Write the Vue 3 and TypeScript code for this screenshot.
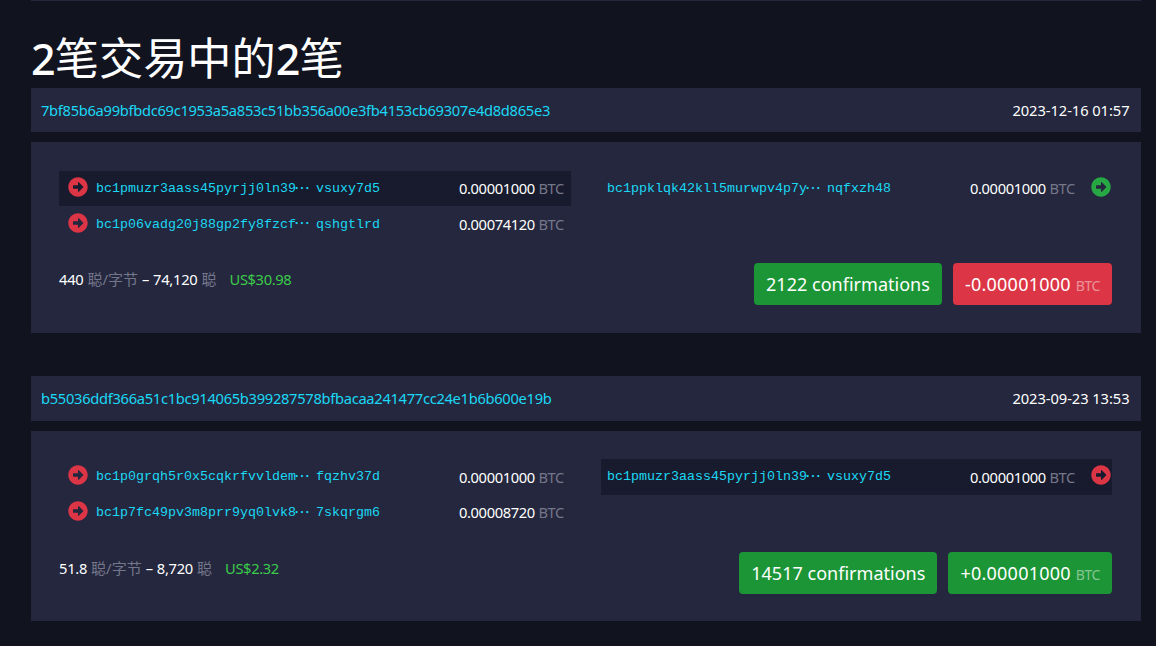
<script setup lang="ts">
interface TxEntry {
  head: string
  tail: string
  amount: string
  active?: boolean
  spent?: boolean
}

interface Tx {
  id: string
  time: string
  inputs: TxEntry[]
  outputs: TxEntry[]
  rate: string
  fee: string
  fiat: string
  confirmations: number
  balance: string
  positive: boolean
}

const arrowPath = 'M256 8c137 0 248 111 248 248S393 504 256 504 8 393 8 256 119 8 256 8zM140 300h116v70.9c0 10.7 13 16.1 20.5 8.5l114.3-114.9c4.7-4.7 4.7-12.2 0-16.9l-114.3-115c-7.6-7.6-20.5-2.2-20.5 8.5V212H140c-6.6 0-12 5.4-12 12v64c0 6.6 5.4 12 12 12z'

const transactions: Tx[] = [
  {
    id: '7bf85b6a99bfbdc69c1953a5a853c51bb356a00e3fb4153cb69307e4d8d865e3',
    time: '2023-12-16 01:57',
    inputs: [
      { head: 'bc1pmuzr3aass45pyrjj0ln39', tail: 'vsuxy7d5', amount: '0.00001000', active: true },
      { head: 'bc1p06vadg20j88gp2fy8fzcf', tail: 'qshgtlrd', amount: '0.00074120' }
    ],
    outputs: [
      { head: 'bc1ppklqk42kll5murwpv4p7y', tail: 'nqfxzh48', amount: '0.00001000' }
    ],
    rate: '440',
    fee: '74,120',
    fiat: 'US$30.98',
    confirmations: 2122,
    balance: '-0.00001000',
    positive: false
  },
  {
    id: 'b55036ddf366a51c1bc914065b399287578bfbacaa241477cc24e1b6b600e19b',
    time: '2023-09-23 13:53',
    inputs: [
      { head: 'bc1p0grqh5r0x5cqkrfvvldem', tail: 'fqzhv37d', amount: '0.00001000' },
      { head: 'bc1p7fc49pv3m8prr9yq0lvk8', tail: '7skqrgm6', amount: '0.00008720' }
    ],
    outputs: [
      { head: 'bc1pmuzr3aass45pyrjj0ln39', tail: 'vsuxy7d5', amount: '0.00001000', active: true, spent: true }
    ],
    rate: '51.8',
    fee: '8,720',
    fiat: 'US$2.32',
    confirmations: 14517,
    balance: '+0.00001000',
    positive: true
  }
]
</script>

<template>
  <main class="page">
    <h1 class="title"><span class="num">2</span>笔交易中的<span class="num">2</span>笔</h1>

    <section v-for="tx in transactions" :key="tx.id" class="tx">
      <div class="tx-header">
        <a class="tx-id">{{ tx.id }}</a>
        <span class="tx-time">{{ tx.time }}</span>
      </div>

      <div class="tx-box">
        <div class="tx-columns">
          <!-- Inputs -->
          <div class="tx-col">
            <div v-for="vin in tx.inputs" :key="vin.head" class="entry" :class="{ active: vin.active }">
              <svg class="arrow red" viewBox="0 0 512 512"><path :d="arrowPath" /></svg>
              <a class="address"><span>{{ vin.head }}</span><span class="dots">…</span><span class="tail">{{ vin.tail }}</span></a>
              <span class="amount">{{ vin.amount }} <span class="unit">BTC</span></span>
            </div>
          </div>

          <!-- Outputs -->
          <div class="tx-col">
            <div v-for="vout in tx.outputs" :key="vout.head" class="entry output" :class="{ active: vout.active }">
              <a class="address"><span>{{ vout.head }}</span><span class="dots">…</span><span class="tail">{{ vout.tail }}</span></a>
              <span class="amount">{{ vout.amount }} <span class="unit">BTC</span></span>
              <svg class="arrow" :class="vout.spent ? 'red' : 'green'" viewBox="0 0 512 512"><path :d="arrowPath" /></svg>
            </div>
          </div>
        </div>

        <div class="summary">
          <div class="fees">
            {{ tx.rate }} <span class="symbol">聪/字节</span> – {{ tx.fee }} <span class="symbol">聪</span>
            <span class="fiat">{{ tx.fiat }}</span>
          </div>
          <div class="badges">
            <button class="badge success">{{ tx.confirmations }} confirmations</button>
            <button class="badge balance" :class="tx.positive ? 'success' : 'danger'">{{ tx.balance }} <span class="badge-unit">BTC</span></button>
          </div>
        </div>
      </div>
    </section>
  </main>
</template>

<style>
body {
  background-color: #11131f;
}
</style>

<style scoped>
.page {
  box-sizing: border-box;
  width: 1110px;
  height: 646px;
  margin-left: 31px;
  overflow: hidden;
  border-top: 1px solid #24273e;
  color: #fff;
  font-family: "Noto Sans", "Noto Sans CJK SC", sans-serif;
  font-size: 14.7px;
  letter-spacing: -0.36px;
}

.title {
  height: 54px;
  margin: 33px 0 0;
  font-family: "Noto Sans CJK SC", sans-serif;
  font-size: 44.2px;
  font-weight: 400;
  line-height: 44px;
  letter-spacing: 0;
  white-space: nowrap;
}
.title .num {
  font-family: "Noto Sans", sans-serif;
  font-weight: 500;
  font-size: 43px;
  letter-spacing: -0.8px;
}

.tx {
  margin-bottom: 43.4px;
}

.tx-header {
  box-sizing: border-box;
  display: flex;
  align-items: center;
  justify-content: space-between;
  height: 44.3px;
  margin-bottom: 10px;
  padding: 0 11.5px 1px 10px;
  background-color: #24273e;
}
.tx-id {
  color: #1bd8f4;
  letter-spacing: -0.3px;
}
.tx-time {
  letter-spacing: -0.06px;
  white-space: nowrap;
}

.tx-box {
  box-sizing: border-box;
  height: 190.7px;
  padding: 28.4px 29px 0 28px;
  background-color: #24273e;
}

.tx-columns {
  display: grid;
  grid-template-columns: 512px 511px;
  gap: 30px;
}

.entry {
  box-sizing: border-box;
  display: flex;
  align-items: center;
  height: 35.7px;
  padding: 0 7px 0 9px;
}
.entry.output {
  padding: 0 1px 0 6px;
}
.entry.active {
  background-color: #181b2d;
}

.arrow {
  flex: none;
  width: 20px;
  height: 20px;
  margin-bottom: 3.4px;
}
.arrow.red { fill: #dc3545; }
.arrow.green { fill: #28a745; }
.output .arrow { margin-left: 16px; }

.address {
  display: flex;
  align-items: center;
  height: 20px;
  margin-left: 8px;
  padding-top: 1px;
  color: #1bd8f4;
  font-family: "Liberation Mono", monospace;
  font-size: 13.33px;
  letter-spacing: 0;
  line-height: 20px;
}
.output .address { margin-left: 0; }
.dots {
  width: 18px;
  margin-left: -2px;
  padding-bottom: 5px;
  font-family: "Noto Sans CJK SC", sans-serif;
  font-size: 16px;
}
.tail { margin-left: 4px; }

.amount {
  margin-left: auto;
  padding-bottom: 0.6px;
  white-space: nowrap;
}
.unit, .symbol {
  color: #74768a;
}

.summary {
  display: flex;
  justify-content: space-between;
  margin-top: 21.3px;
}

.fees {
  height: 32.6px;
  line-height: 32.6px;
  letter-spacing: -0.25px;
  word-spacing: 0.4px;
  white-space: nowrap;
}
.symbol {
  font-size: 15px;
  letter-spacing: 0;
}
.fiat {
  margin-left: 9px;
  color: #3bcc49;
  letter-spacing: -0.36px;
}
.symbol + .fiat {
  margin-left: 10px;
}
.fees .fiat {
  padding-left: 3px;
}

.badges {
  display: flex;
  gap: 11px;
}
.badge {
  height: 42px;
  padding: 0 12px;
  border: none;
  border-radius: 4px;
  color: #fff;
  font-family: "Noto Sans", sans-serif;
  font-size: 18px;
  letter-spacing: 0.02px;
  white-space: nowrap;
}
.balance {
  letter-spacing: 0.24px;
}
.success { background-color: #1c9536; }
.danger { background-color: #dc3545; }
.badge-unit {
  font-size: 14px;
  letter-spacing: -0.4px;
  opacity: 0.45;
}
</style>
